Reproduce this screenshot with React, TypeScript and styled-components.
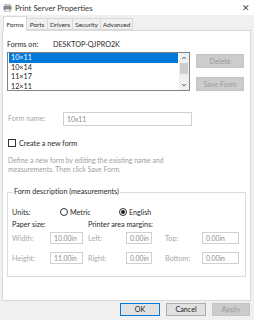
import React from "react";
import styled, { createGlobalStyle } from "styled-components";

const Global = createGlobalStyle`
  html, body { margin: 0; padding: 0; background: #ffffff; }
  body { font-family: Lato, "Noto Sans", "Liberation Sans", sans-serif; font-size: 7.2px; color: #222; }
  * { box-sizing: border-box; }
`;

const Window = styled.div`
  width: 254px;
  height: 320px;
  display: flex;
  flex-direction: column;
  background: #f0f0f0;
  overflow: hidden;
`;

const TitleBar = styled.div`
  height: 15px;
  flex-shrink: 0;
  background: #ffffff;
  display: flex;
  align-items: center;
  padding: 0 4px 0 3px;
  gap: 3px;
  font-size: 7.8px;
  color: #333;
`;

const TitleText = styled.span`
  flex: 1;
`;

const Close = styled.span`
  font-size: 9px;
  color: #444;
`;

const Content = styled.div`
  flex: 1;
  display: flex;
  flex-direction: column;
  padding: 1px 3px 0 2px;
`;

const Tabs = styled.div`
  display: flex;
  align-items: flex-end;
  height: 14px;
  padding-left: 1px;
`;

const Tab = styled.div<{ $active?: boolean; $w: number }>`
  width: ${(p) => p.$w}px;
  height: ${(p) => (p.$active ? "15px" : "12px")};
  display: flex;
  align-items: center;
  justify-content: center;
  font-size: 6.5px;
  letter-spacing: -0.1px;
  white-space: nowrap;
  color: #333;
  background: ${(p) => (p.$active ? "#ffffff" : "#f0f0f0")};
  border: 1px solid #d9d9d9;
  border-bottom: ${(p) => (p.$active ? "none" : "1px solid #d9d9d9")};
  margin-right: -1px;
  position: relative;
  z-index: ${(p) => (p.$active ? 2 : 1)};
  margin-bottom: ${(p) => (p.$active ? "-1px" : "0")};
`;

const Panel = styled.div`
  height: 271px;
  background: #ffffff;
  border: 1px solid #d9d9d9;
  padding: 8px 6px 0 4px;
  display: flex;
  flex-direction: column;
`;

const Row = styled.div<{ $h?: number; $mt?: number; $ml?: number }>`
  display: flex;
  align-items: center;
  height: ${(p) => p.$h ?? 10}px;
  margin-top: ${(p) => p.$mt ?? 0}px;
  margin-left: ${(p) => p.$ml ?? 0}px;
  flex-shrink: 0;
`;

const Label = styled.span<{ $w?: number; $muted?: boolean; $ml?: number }>`
  width: ${(p) => (p.$w ? `${p.$w}px` : "auto")};
  margin-left: ${(p) => p.$ml ?? 0}px;
  flex-shrink: 0;
  font-size: 7.2px;
  white-space: nowrap;
  color: ${(p) => (p.$muted ? "#a8a8a8" : "#2a2a2a")};
`;

const ListArea = styled.div`
  display: flex;
  margin-top: 3px;
  gap: 6px;
`;

const ListBox = styled.div`
  width: 185px;
  height: 39px;
  border: 1px solid #828282;
  display: flex;
  background: #fff;
`;

const Items = styled.div`
  flex: 1;
  padding: 0 1px;
  display: flex;
  flex-direction: column;
`;

const Item = styled.div<{ $sel?: boolean }>`
  height: 9.6px;
  flex-shrink: 0;
  font-size: 7.2px;
  padding-left: 2px;
  background: ${(p) => (p.$sel ? "#0078d7" : "transparent")};
  color: ${(p) => (p.$sel ? "#ffffff" : "#222")};
  display: flex;
  align-items: center;
`;

const Scroll = styled.div`
  width: 10px;
  background: #f0f0f0;
  display: flex;
  flex-direction: column;
  align-items: center;
  justify-content: space-between;
  position: relative;
`;

const Arrow = styled.svg`
  width: 6px;
  height: 6px;
  margin: 2px 0;
`;

const Thumb = styled.div`
  position: absolute;
  top: 10px;
  width: 8px;
  height: 11px;
  background: #cdcdcd;
`;

const SideButtons = styled.div`
  display: flex;
  flex-direction: column;
  gap: 9px;
  padding-top: 2px;
`;

const Button = styled.div<{ $w?: number; $disabled?: boolean; $default?: boolean }>`
  width: ${(p) => (p.$w ? `${p.$w}px` : "48px")};
  height: 14px;
  flex-shrink: 0;
  display: flex;
  align-items: center;
  justify-content: center;
  font-size: 7.2px;
  background: ${(p) => (p.$disabled ? "#cccccc" : "#e1e1e1")};
  color: ${(p) => (p.$disabled ? "#9a9a9a" : "#222")};
  border: 1px solid ${(p) => (p.$default ? "#0078d7" : p.$disabled ? "#c4c4c4" : "#adadad")};
`;

const FooterButton = styled(Button)`
  height: 13px;
`;

const TextBox = styled.div<{ $w: number; $h?: number }>`
  width: ${(p) => p.$w}px;
  height: ${(p) => p.$h ?? 12}px;
  flex-shrink: 0;
  border: 1px solid #d0d0d0;
  background: #fff;
  display: flex;
  align-items: center;
  padding-left: 3px;
  font-size: 6.8px;
  color: #8c8c8c;
`;

const CheckBox = styled.div`
  width: 8px;
  height: 8px;
  border: 1px solid #333;
  margin-right: 3px;
  background: #fff;
`;

const Desc = styled.div`
  margin-top: 8px;
  margin-left: 1px;
  font-size: 6.9px;
  line-height: 9px;
  color: #a0a0a0;
  white-space: nowrap;
`;

const Group = styled.fieldset`
  margin: 13px 0 0 0;
  width: 239px;
  border: 1px solid #dcdcdc;
  padding: 10px 4px 12px 4px;
  display: flex;
  flex-direction: column;
`;

const Legend = styled.legend`
  padding: 0 1px;
  margin-left: 1px;
  height: 10px;
  line-height: 10px;
  font-size: 7.2px;
  color: #2a2a2a;
`;

const Radio = styled.div<{ $on?: boolean }>`
  width: 8px;
  height: 8px;
  border-radius: 50%;
  border: 1px solid #333;
  margin-right: 2px;
  display: flex;
  align-items: center;
  justify-content: center;
  &::after {
    content: "";
    width: 4px;
    height: 4px;
    border-radius: 50%;
    background: ${(p) => (p.$on ? "#222" : "transparent")};
  }
`;

const RadioItem = styled.div<{ $w?: number }>`
  display: flex;
  align-items: center;
  width: ${(p) => (p.$w ? `${p.$w}px` : "auto")};
  font-size: 7.2px;
  color: #2a2a2a;
`;

const Footer = styled.div`
  flex: 1;
  display: flex;
  justify-content: flex-end;
  align-items: flex-start;
  padding-top: 2px;
  gap: 6px;
  padding-right: 1px;
`;

export default function App() {
  return (
    <>
      <Global />
      <Window>
        <TitleBar>
          <svg width="9" height="8" viewBox="0 0 9 8">
            <rect x="2" y="0" width="5" height="2" fill="#e8e8e8" stroke="#777" strokeWidth="0.6" />
            <rect x="0.5" y="2" width="8" height="4" fill="#8a8a8a" />
            <rect x="2" y="5" width="5" height="3" fill="#f4f4f4" stroke="#777" strokeWidth="0.6" />
          </svg>
          <TitleText>Print Server Properties</TitleText>
          <Close>✕</Close>
        </TitleBar>
        <Content>
          <Tabs>
            <Tab $active $w={24}>Forms</Tab>
            <Tab $w={22}>Ports</Tab>
            <Tab $w={26}>Drivers</Tab>
            <Tab $w={29}>Security</Tab>
            <Tab $w={33}>Advanced</Tab>
          </Tabs>
          <Panel>
            <Row>
              <Label $w={46}>Forms on:</Label>
              <Label>DESKTOP-QJPRO2K</Label>
            </Row>
            <ListArea>
              <ListBox>
                <Items>
                  <Item $sel>10×11</Item>
                  <Item>10×14</Item>
                  <Item>11×17</Item>
                  <Item>12×11</Item>
                </Items>
                <Scroll>
                  <Arrow viewBox="0 0 6 6">
                    <path d="M1 4 L3 2 L5 4" stroke="#555" strokeWidth="0.9" fill="none" />
                  </Arrow>
                  <Thumb />
                  <Arrow viewBox="0 0 6 6">
                    <path d="M1 2 L3 4 L5 2" stroke="#555" strokeWidth="0.9" fill="none" />
                  </Arrow>
                </Scroll>
              </ListBox>
              <SideButtons>
                <Button $disabled>Delete</Button>
                <Button $disabled>Save Form</Button>
              </SideButtons>
            </ListArea>
            <Row $h={13} $mt={21} $ml={1}>
              <Label $w={55} $muted>Form name:</Label>
              <TextBox $w={129} $h={14}>10x11</TextBox>
            </Row>
            <Row $mt={13} $ml={1}>
              <CheckBox />
              <Label>Create a new form</Label>
            </Row>
            <Desc>
              Define a new form by editing the existing name and
              <br />
              measurements. Then click Save Form.
            </Desc>
            <Group>
              <Legend>Form description (measurements)</Legend>
              <Row>
                <Label $w={48}>Units:</Label>
                <RadioItem $w={59}>
                  <Radio />
                  Metric
                </RadioItem>
                <RadioItem>
                  <Radio $on />
                  English
                </RadioItem>
              </Row>
              <Row $mt={2}>
                <Label $w={76}>Paper size:</Label>
                <Label>Printer area margins:</Label>
              </Row>
              <Row $h={12} $mt={3}>
                <Label $w={38} $muted>Width:</Label>
                <TextBox $w={33}>10.00in</TextBox>
                <Label $w={38} $muted $ml={5}>Left:</Label>
                <TextBox $w={26}>0.00in</TextBox>
                <Label $w={37} $muted $ml={13}>Top:</Label>
                <TextBox $w={37}>0.00in</TextBox>
              </Row>
              <Row $h={12} $mt={8}>
                <Label $w={38} $muted>Height:</Label>
                <TextBox $w={33}>11.00in</TextBox>
                <Label $w={38} $muted $ml={5}>Right:</Label>
                <TextBox $w={26}>0.00in</TextBox>
                <Label $w={37} $muted $ml={13}>Bottom:</Label>
                <TextBox $w={37}>0.00in</TextBox>
              </Row>
            </Group>
          </Panel>
          <Footer>
            <FooterButton $w={40} $default>OK</FooterButton>
            <FooterButton $w={40}>Cancel</FooterButton>
            <FooterButton $w={38} $disabled>Apply</FooterButton>
          </Footer>
        </Content>
      </Window>
    </>
  );
}
